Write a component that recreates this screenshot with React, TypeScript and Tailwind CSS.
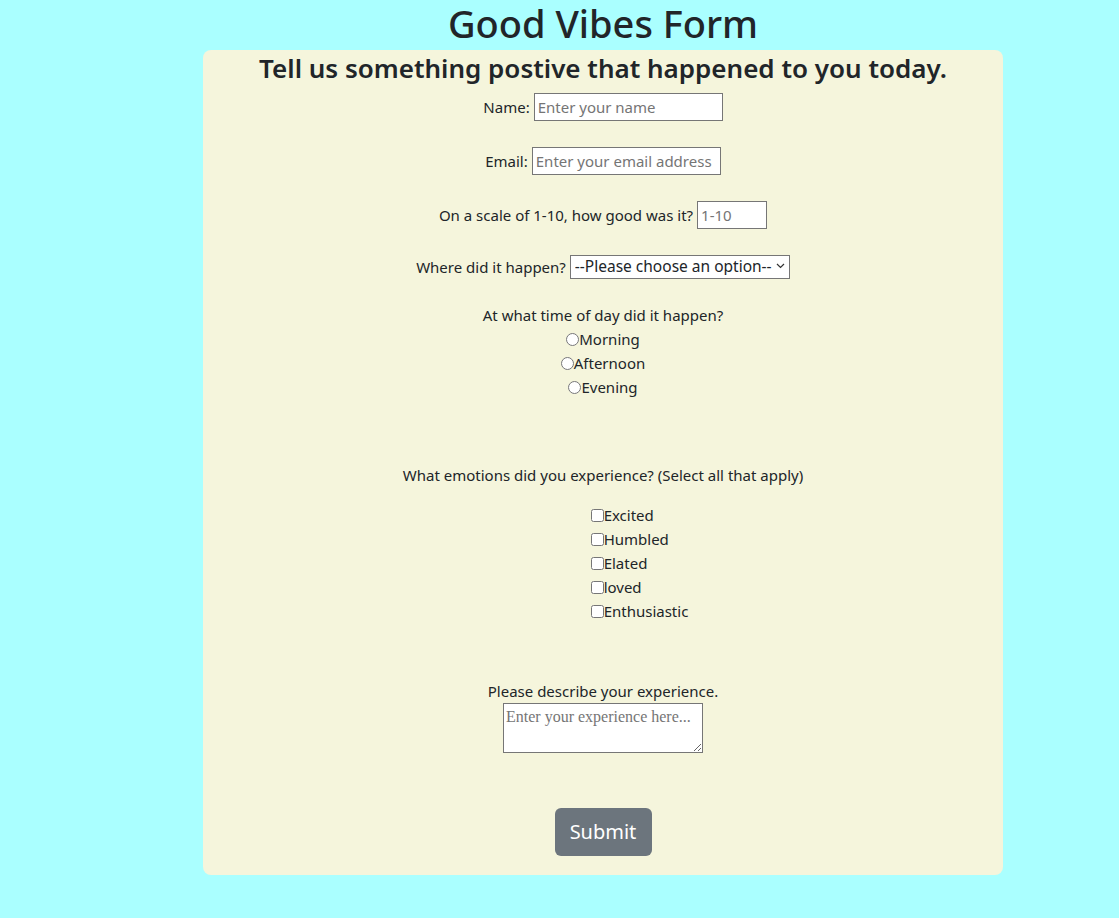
import { useState } from "react";

const font = { fontFamily: '"Noto Sans", "Open Sans", Arial, sans-serif' };

export default function App() {
  const [time, setTime] = useState("");

  return (
    <div className="min-h-[918px] bg-[#aaffff] text-[#212529]" style={font}>
      <div className="ml-[203px] w-[800px]">
        <h1 className="text-center text-[38px] leading-[46px] font-medium">Good Vibes Form</h1>

        <form className="mt-[4px] flex h-[825px] flex-col items-center rounded-lg bg-[#f5f5dc] text-[15px]">
          <h3 className="text-[26px] leading-[36px] font-semibold">
            Tell us something postive that happened to you today.
          </h3>

          <div className="mt-[7px] flex items-center gap-1">
            <label htmlFor="name">Name:</label>
            <input
              id="name"
              type="text"
              placeholder="Enter your name"
              className="h-[28px] w-[189px] border border-[#767676] bg-white px-[3px] placeholder:text-[#757575]"
            />
          </div>

          <div className="mt-[26px] flex items-center gap-1">
            <label htmlFor="email">Email:</label>
            <input
              id="email"
              type="email"
              placeholder="Enter your email address"
              className="h-[28px] w-[189px] border border-[#767676] bg-white px-[3px] placeholder:text-[#757575]"
            />
          </div>

          <div className="mt-[26px] flex items-center gap-1">
            <label htmlFor="scale">On a scale of 1-10, how good was it?</label>
            <input
              id="scale"
              type="text"
              placeholder="1-10"
              className="h-[28px] w-[70px] border border-[#767676] bg-white px-[3px] placeholder:text-[#757575]"
            />
          </div>

          <div className="mt-[26px] flex items-center gap-1">
            <label htmlFor="place">Where did it happen?</label>
            <div className="relative">
              <select
                id="place"
                className="h-[24px] w-[220px] appearance-none border border-[#767676] bg-white pl-[4px] pr-4 text-[15.5px] leading-none"
              >
                <option>--Please choose an option--</option>
                <option>Home</option>
                <option>Work</option>
                <option>School</option>
              </select>
              <svg
                className="pointer-events-none absolute top-[8px] right-[5px]"
                width="9"
                height="6"
                viewBox="0 0 9 6"
              >
                <path d="M1 1l3.5 3.5L8 1" fill="none" stroke="#333" strokeWidth="1.2" />
              </svg>
            </div>
          </div>

          <p className="mt-[24px] leading-6">At what time of day did it happen?</p>
          <div className="flex flex-col items-center leading-6">
            {["Morning", "Afternoon", "Evening"].map((t) => (
              <label key={t} className="flex items-center">
                <input
                  type="radio"
                  name="time"
                  checked={time === t}
                  onChange={() => setTime(t)}
                  className="h-[13px] w-[13px]"
                />
                {t}
              </label>
            ))}
          </div>

          <p className="mt-[64px] leading-6">What emotions did you experience? (Select all that apply)</p>
          <div className="mt-[16px] ml-[73px] flex flex-col items-start leading-6">
            {["Excited", "Humbled", "Elated", "loved", "Enthusiastic"].map((e) => (
              <label key={e} className="flex items-center">
                <input type="checkbox" className="h-[13px] w-[13px]" />
                {e}
              </label>
            ))}
          </div>

          <p className="mt-[56px] leading-6">Please describe your experience.</p>
          <textarea
            placeholder="Enter your experience here..."
            className="h-[50px] w-[200px] border border-[#767676] bg-white px-[2px] pt-[3px] text-[16px] leading-[20px] placeholder:text-[#757575]"
            style={{ fontFamily: '"Liberation Serif", serif' }}
          />

          <button
            type="button"
            className="mt-[55px] h-[48px] w-[97px] rounded-md bg-[#6c757d] text-[20px] text-white"
          >
            Submit
          </button>
        </form>
      </div>
    </div>
  );
}
